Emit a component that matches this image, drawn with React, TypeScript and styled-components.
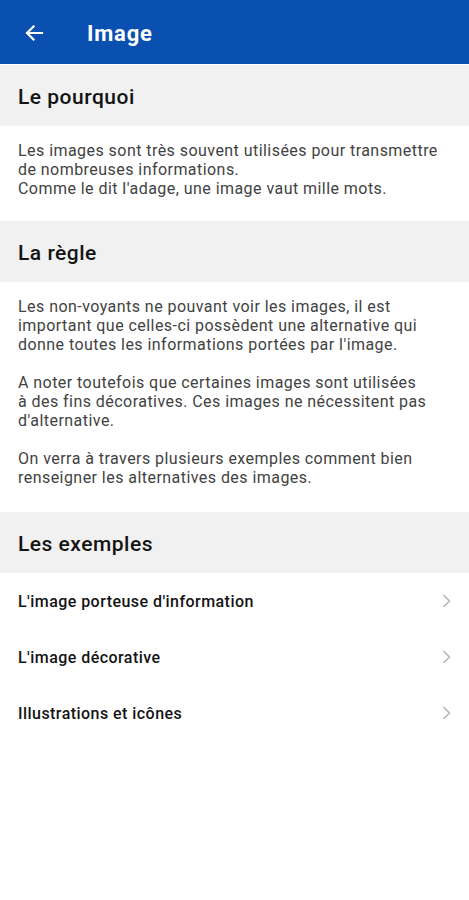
import React from 'react';
import styled, { createGlobalStyle } from 'styled-components';

const GlobalStyle = createGlobalStyle`
body {
  margin: 0;
  background: #ffffff;
  font-family: Roboto, "Noto Sans", sans-serif;
}
`;

type Example = { id: number; label: string };

const examples: Example[] = [
  { id: 1, label: "L'image porteuse d'information" },
  { id: 2, label: "L'image décorative" },
  { id: 3, label: 'Illustrations et icônes' },
];

const App: React.FC = () => {
  return (
    <Page>
      <GlobalStyle />
      <TopBar>
        <BackButton aria-label="Retour">
          <svg width="20" height="20" viewBox="0 0 20 20" fill="none">
            <path d="M18 10H3M9.5 3.5L3 10l6.5 6.5" stroke="#fff" strokeWidth="2.2" strokeLinecap="square" />
          </svg>
        </BackButton>
        <Title>Image</Title>
      </TopBar>

      <SectionHeader>Le pourquoi</SectionHeader>
      <Body>
        <Paragraph>
          Les images sont très souvent utilisées pour transmettre
          <br />
          de nombreuses informations.
          <br />
          Comme le dit l'adage, une image vaut mille mots.
        </Paragraph>
      </Body>

      <SectionHeader>La règle</SectionHeader>
      <Body $bottom={24}>
        <Paragraph>
          Les non-voyants ne pouvant voir les images, il est
          <br />
          important que celles-ci possèdent une alternative qui
          <br />
          donne toutes les informations portées par l'image.
        </Paragraph>
        <Paragraph>
          A noter toutefois que certaines images sont utilisées
          <br />
          à des fins décoratives. Ces images ne nécessitent pas
          <br />
          d'alternative.
        </Paragraph>
        <Paragraph>
          On verra à travers plusieurs exemples comment bien
          <br />
          renseigner les alternatives des images.
        </Paragraph>
      </Body>

      <SectionHeader>Les exemples</SectionHeader>
      <List>
        {examples.map(item => (
          <Row key={item.id}>
            <RowLabel>{item.label}</RowLabel>
            <svg width="10" height="16" viewBox="0 0 10 16" fill="none">
              <path d="M2.5 2l6 6-6 6" stroke="#b5b5b5" strokeWidth="1.5" />
            </svg>
          </Row>
        ))}
      </List>
    </Page>
  );
};

const Page = styled.div`
width: 469px;
min-height: 900px;
background: #ffffff;
`;

const TopBar = styled.header`
height: 64px;
background-color: #0a50b0;
display: flex;
align-items: center;
padding: 2px 0 0 24px;
box-sizing: border-box;
`;

const BackButton = styled.div`
width: 20px;
height: 20px;
display: flex;
align-items: center;
justify-content: center;
margin-right: 43px;
`;

const Title = styled.h1`
margin: 0;
color: #ffffff;
font-size: 22px;
font-weight: 700;
letter-spacing: 0.8px;
`;

const SectionHeader = styled.h2`
margin: 1px 0 0;
height: 61px;
box-sizing: border-box;
background-color: #f1f1f1;
display: flex;
align-items: center;
padding: 2px 18px 0;
font-size: 21px;
font-weight: 500;
letter-spacing: 0.5px;
color: #141414;
`;

const Body = styled.div<{ $bottom?: number }>`
padding: 15px 18px ${p => p.$bottom ?? 22}px;
display: flex;
flex-direction: column;
gap: 19px;
`;

const Paragraph = styled.p`
margin: 0;
font-size: 16px;
line-height: 19px;
letter-spacing: 0.45px;
color: #424242;
white-space: nowrap;
`;

const List = styled.div`
display: flex;
flex-direction: column;
`;

const Row = styled.div`
height: 56px;
display: flex;
align-items: center;
justify-content: space-between;
padding: 0 18px 0 18px;
`;

const RowLabel = styled.span`
font-size: 16px;
font-weight: 500;
letter-spacing: 0.45px;
color: #141414;
`;

export default App;
